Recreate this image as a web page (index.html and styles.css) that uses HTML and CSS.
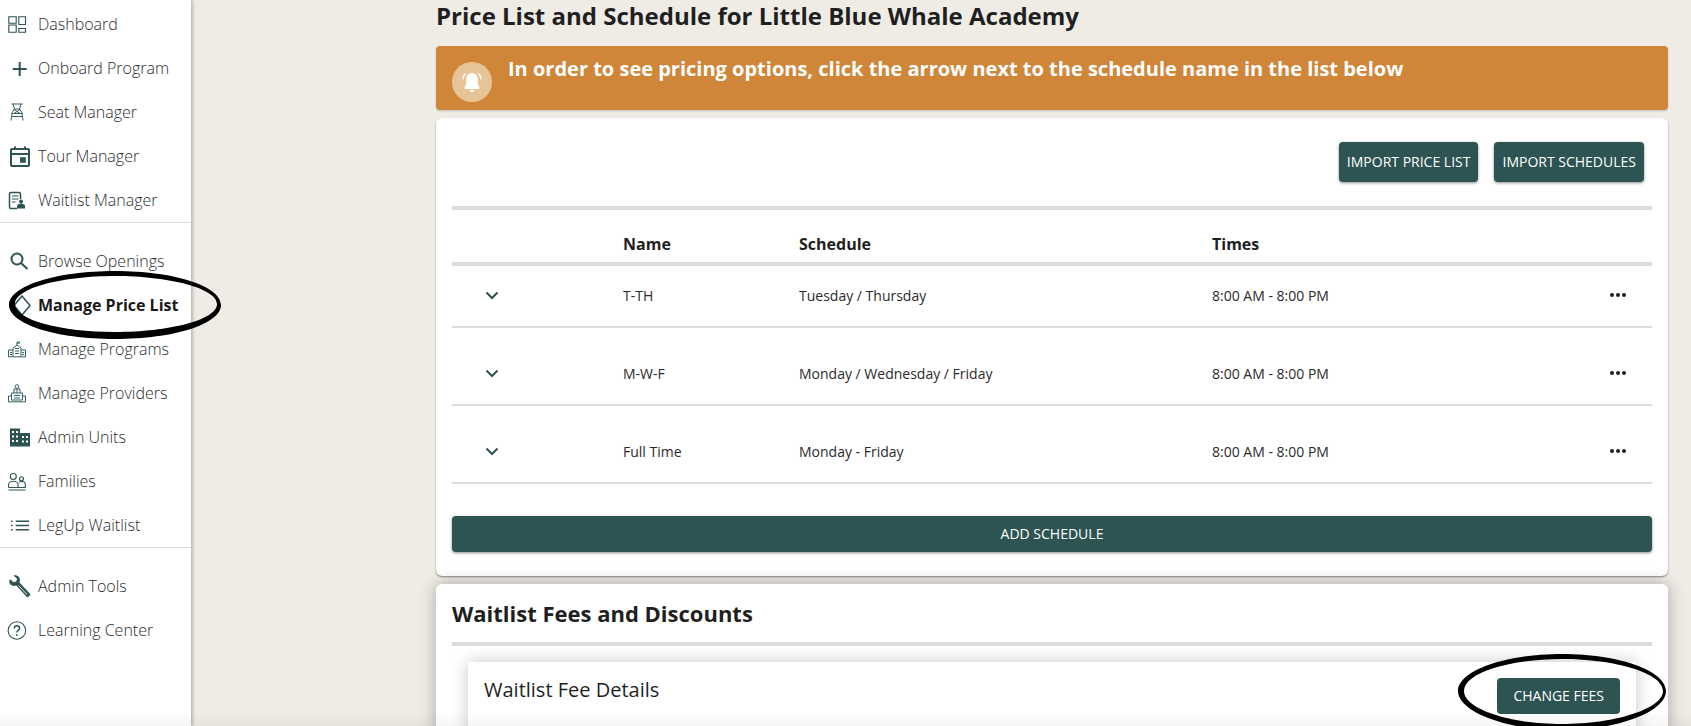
FILE: index.html
```html
<!DOCTYPE html>
<html lang="en">

<head>
  <meta charset="UTF-8">
  <title>Manage Price List</title>
  <link rel="stylesheet" href="styles.css">
</head>

<body>
  <nav class="sidebar">
    <ul class="nav-group">
      <li class="nav-item">
        <svg class="nav-icon" viewBox="0 0 25 25"><path d="M1.800 4.700h7.400v6.500h-7.400zM1.800 13h7.400v7.300h-7.400zM11.800 4.700h6.700v7.800h-6.700zM11.800 16.500h6.700v3.800h-6.700z"/></svg>
        Dashboard
      </li>
      <li class="nav-item">
        <svg class="nav-icon" viewBox="0 0 25 25"><path class="thick" d="M12.700 6v14M5.700 13h14"/></svg>
        Onboard Program
      </li>
      <li class="nav-item">
        <svg class="nav-icon pale" viewBox="0 0 25 25"><path d="M4.500 4h11M6 4l1.500 5h5L14 4M7.500 9l-3 4.500M12.500 9l3 4.500M7 9.500l6 4M13 9.500l-6 4M4.500 13.500h11M5 13.500l-1 7M15 13.500l1 7M5 16.500h10"/></svg>
        Seat Manager
      </li>
      <li class="nav-item">
        <svg class="nav-icon" viewBox="0 0 25 25"><path class="thick" d="M5 5h16a1 1 0 0 1 1 1v15a1 1 0 0 1-1 1H5a1 1 0 0 1-1-1V6a1 1 0 0 1 1-1zM4 10h18M8 2.500v3M18 2.500v3"/><rect class="solid" x="13" y="13.200" width="5.800" height="5.600"/></svg>
        Tour Manager
      </li>
      <li class="nav-item">
        <svg class="nav-icon" viewBox="0 0 25 25"><path class="mid" d="M10 20.500H4a1.500 1.500 0 0 1-1.500-1.500V6A1.500 1.500 0 0 1 4 4.500h8A1.500 1.500 0 0 1 13.500 6v5"/><path d="M5 8h6.500M5 11h6.500M5 14h3.500"/><circle class="solid" cx="14" cy="13.500" r="2"/><path class="solid" d="M10 20.500V18c0-1.500 2-2.500 4-2.500s4 1 4 2.500v2.500z"/></svg>
        Waitlist Manager
      </li>
    </ul>
    <ul class="nav-group">
      <li class="nav-item">
        <svg class="nav-icon" viewBox="0 0 25 25"><circle class="thick" cx="10" cy="10" r="5.500"/><path class="thick" d="M14 14l6.500 6"/></svg>
        Browse Openings
      </li>
      <li class="nav-item active">
        <svg class="nav-icon" viewBox="0 0 25 25"><path class="mid" d="M15 3l8 9.500-8 9.500-8-9.500z"/></svg>
        Manage Price List
      </li>
      <li class="nav-item">
        <svg class="nav-icon pale" viewBox="0 0 25 25"><path d="M6 11l4-3 4 3M10 8V5h2.500V6.200H10M6 11v8.500M14 11v8.500M1.500 13H6M14 13h4.500M1.500 13v6.500M18.500 13v6.500M1 19.800h18M8 11.500h4M8 14h4M8 16.500h4M3 15.500h2M3 17.500h2M15 15.500h2M15 17.500h2"/></svg>
        Manage Programs
      </li>
      <li class="nav-item">
        <svg class="nav-icon pale" viewBox="0 0 25 25"><circle cx="10" cy="5.500" r="1.800"/><path d="M7 12V8h6v4M4.500 12h11v7h-11zM1.500 15h3M15.500 15h3M1.500 15v5.500M18.500 15v5.500M1 20.800h18M7 14.500h6M7 17h6M10 8v4"/></svg>
        Manage Providers
      </li>
      <li class="nav-item">
        <svg class="nav-icon" viewBox="0 0 25 25"><path class="solid" fill-rule="evenodd" d="M3 3.500h10v4.500h10v13.500H3zM5 6v2h2V6zM9 6v2h2V6zM5 10.500v2h2v-2zM9 10.500v2h2v-2zM5 15v2h2v-2zM9 15v2h2v-2zM15 11v2h2v-2zM19 11v2h2v-2zM15 15.500v2h2v-2zM19 15.500v2h2v-2z"/></svg>
        Admin Units
      </li>
      <li class="nav-item">
        <svg class="nav-icon" viewBox="0 0 25 25"><circle cx="6.300" cy="7.500" r="3"/><circle cx="14.500" cy="9.800" r="2"/><path d="M1.500 18.500v-3c0-2 2.500-3.200 4.800-3.200s4.800 1.200 4.800 3.200v3M12 13.200c.8-.5 1.700-.7 2.500-.7 2 0 3.800 1 3.800 2.800v3.200H11.100M1.500 18.500h9.600M1.500 21h17"/></svg>
        Families
      </li>
      <li class="nav-item">
        <svg class="nav-icon" viewBox="0 0 25 25"><path class="mid" d="M8.700 8.200H22M8.700 12.500H22M8.700 16.800H22M4 8.200h1.600M4 12.500h1.600M4 16.800h1.600"/></svg>
        LegUp Waitlist
      </li>
    </ul>
    <ul class="nav-group last">
      <li class="nav-item">
        <svg class="nav-icon" viewBox="0 0 25 25"><path class="solid" d="M3 5l3.500 3.200 2.800-.7.800-2.800L6.500 1.500c3-.8 6.300 1 6.500 4.500 0 1-.2 1.800-.6 2.500l10.400 11c.6.700.6 1.300 0 1.900l-1.300 1.300c-.6.600-1.300.6-1.900 0L9.300 11.500c-.9.400-1.800.5-2.800.4C3 11.500 1.300 8.300 3 5z"/><path class="cut" d="M11.500 11.500l8.500 9"/></svg>
        Admin Tools
      </li>
      <li class="nav-item">
        <svg class="nav-icon" viewBox="0 0 25 25"><circle cx="9.900" cy="12.500" r="8.800"/><path class="mid" d="M7.300 10.500c0-1.700 1.200-2.700 2.600-2.700s2.600 1 2.600 2.500c0 2.200-2.600 2-2.600 4.300"/><circle class="solid" cx="9.900" cy="17" r=".9"/></svg>
        Learning Center
      </li>
    </ul>
  </nav>

  <main class="content">
    <h1 class="page-title">Price List and Schedule for Little Blue Whale Academy</h1>

    <div class="banner">
      <span class="banner-icon">
        <svg viewBox="0 0 24 24" width="24" height="24"><path class="bell" d="M12 3c-3.800 0-5.800 3-5.800 6.500v4.500L4.500 17.500V19h15v-1.500L17.800 14V9.500C17.800 6 15.800 3 12 3zM9.800 20h4.400a2.200 2 0 0 1-4.400 0z"/><path class="bell-line" d="M2.800 9c.3-2.200 1.300-4 2.800-5.500M21.200 9c-.3-2.200-1.300-4-2.800-5.500"/></svg>
      </span>
      <p class="banner-text">In order to see pricing options, click the arrow next to the schedule name in the list below</p>
    </div>

    <section class="card">
      <div class="card-actions">
        <button class="btn">IMPORT PRICE LIST</button>
        <button class="btn">IMPORT SCHEDULES</button>
      </div>
      <div class="table-row table-head">
        <span></span>
        <span>Name</span>
        <span>Schedule</span>
        <span>Times</span>
        <span></span>
      </div>
      <div class="table-row first">
        <svg class="chevron" viewBox="0 0 14 9"><path d="M1.500 1.500l5.500 5.500 5.500-5.500"/></svg>
        <span>T-TH</span>
        <span>Tuesday / Thursday</span>
        <span>8:00 AM - 8:00 PM</span>
        <span class="dots"><i></i><i></i><i></i></span>
      </div>
      <div class="table-row">
        <svg class="chevron" viewBox="0 0 14 9"><path d="M1.500 1.500l5.500 5.500 5.500-5.500"/></svg>
        <span>M-W-F</span>
        <span>Monday / Wednesday / Friday</span>
        <span>8:00 AM - 8:00 PM</span>
        <span class="dots"><i></i><i></i><i></i></span>
      </div>
      <div class="table-row">
        <svg class="chevron" viewBox="0 0 14 9"><path d="M1.500 1.500l5.500 5.500 5.500-5.500"/></svg>
        <span>Full Time</span>
        <span>Monday - Friday</span>
        <span>8:00 AM - 8:00 PM</span>
        <span class="dots"><i></i><i></i><i></i></span>
      </div>
      <button class="btn btn-wide">ADD SCHEDULE</button>
    </section>

    <section class="card card-raised">
      <h2 class="card-title">Waitlist Fees and Discounts</h2>
      <div class="inner-card">
        <h3 class="inner-title">Waitlist Fee Details</h3>
        <button class="btn btn-small">CHANGE FEES</button>
      </div>
    </section>
  </main>

  <div class="bottom-fade"></div>

  <svg class="mark mark-nav" viewBox="0 0 214 70"><path fill-rule="evenodd" d="M107 1C166 1 213 16 213 35S166 69 107 69 1 54 1 35 48 1 107 1zM107 6C54 6 7 18 7 34s46 28 100 28 102-12 102-28S160 6 107 6z"/></svg>
  <svg class="mark mark-fees" viewBox="0 0 210 78"><path fill-rule="evenodd" d="M105 1c58 0 104 17 104 37s-46 39-104 39S1 58 1 38 47 1 105 1zM105 6C52 6 7 20 7 38s46 33 98 33 101-15 101-33S158 6 105 6z"/></svg>
</body>

</html>
```

FILE: styles.css
```css
* {
  box-sizing: border-box;
}

html,
body {
  height: 100%;
}

body {
  margin: 0;
  display: flex;
  overflow: hidden;
  font-family: "Open Sans", sans-serif;
  background: #efece6;
  color: #1f1f1f;
}

.sidebar {
  flex: 0 0 191px;
  height: 726px;
  padding-top: 2px;
  background: #fff;
  box-shadow: 2px 0 3px rgba(0, 0, 0, 0.22);
}

.nav-group {
  list-style: none;
  margin: 0;
  padding: 0;
  border-bottom: 1px solid #dcdcdc;
}

.nav-group + .nav-group {
  padding-top: 16px;
}

.nav-group.last {
  border-bottom: none;
}

.nav-item {
  display: flex;
  align-items: center;
  gap: 6px;
  height: 44px;
  padding-left: 7px;
  font-size: 16px;
  font-weight: 300;
  color: #2c2c2c;
  white-space: nowrap;
}

.nav-item.active {
  font-weight: 700;
  color: #1a1a1a;
}

.nav-icon {
  flex: 0 0 25px;
  width: 25px;
  height: 25px;
  fill: none;
  stroke: #2d5353;
  stroke-width: 1.1;
}

.nav-icon.pale {
  stroke: #356060;
  stroke-width: 1;
}

.nav-icon .mid {
  stroke-width: 1.5;
}

.nav-icon .thick {
  stroke-width: 2;
}

.nav-icon .solid {
  fill: #2d5353;
  stroke: none;
}

.nav-icon .cut {
  stroke: #fff;
  stroke-width: 0.9;
}

.content {
  flex: 1;
  height: 726px;
  padding: 0 23px 0 245px;
  overflow: hidden;
}

.page-title {
  margin: 0 0 12px;
  height: 34px;
  font-size: 24px;
  line-height: 32px;
  font-weight: 700;
}

.banner {
  display: flex;
  gap: 16px;
  height: 64px;
  margin-bottom: 8px;
  padding: 16px;
  background: #d08639;
  border-radius: 4px;
  box-shadow: 0 1px 2px rgba(0, 0, 0, 0.2);
}

.banner-icon {
  display: flex;
  align-items: center;
  justify-content: center;
  flex: 0 0 40px;
  width: 40px;
  height: 40px;
  border-radius: 50%;
  background: #e7c497;
}

.bell {
  fill: #fff;
}

.bell-line {
  fill: none;
  stroke: #fff;
  stroke-width: 1.4;
}

.banner-text {
  margin: -5px 0 0;
  font-size: 20px;
  line-height: 20px;
  padding-top: 2px;
  font-weight: 700;
  color: #fff;
  white-space: nowrap;
}

.card {
  margin-bottom: 8px;
  padding: 24px 16px;
  background: #fff;
  border-radius: 6px;
  box-shadow: 0 1px 2px rgba(0, 0, 0, 0.45);
}

.card-raised {
  padding: 0 16px;
  height: 200px;
  box-shadow: 0 0 16px rgba(0, 0, 0, 0.3);
}

.card-actions {
  display: flex;
  justify-content: flex-end;
  gap: 16px;
  height: 64px;
  padding-right: 8px;
}

.btn {
  height: 40px;
  padding: 0 8px 2px;
  font-family: inherit;
  font-size: 14px;
  color: #fff;
  background: #2d5353;
  border: none;
  border-radius: 4px;
  box-shadow: 0 1px 3px rgba(0, 0, 0, 0.45);
}

.btn-wide {
  display: block;
  width: 100%;
  height: 36px;
  margin-top: 32px;
}

.btn-small {
  height: 36px;
  padding: 0 16px 2px;
  box-shadow: none;
}

.table-row {
  display: grid;
  grid-template-columns: 171px 176px 413px 1fr 42px;
  align-items: center;
  height: 78px;
  padding: 16px 0 2px;
  font-size: 14px;
  color: #2b2b2b;
  border-bottom: 2px solid #dcdcdc;
}

.table-row.first {
  height: 62px;
  padding-top: 0;
}

.table-head {
  height: 60px;
  padding: 16px 0 0;
  font-size: 16px;
  font-weight: 700;
  color: #1f1f1f;
  border-top: 4px solid #dcdcdc;
  border-bottom: 4px solid #dcdcdc;
}

.chevron {
  justify-self: start;
  width: 14px;
  height: 9px;
  margin-left: 33px;
  fill: none;
  stroke: #2d5353;
  stroke-width: 2;
}

.dots {
  display: flex;
  gap: 2px;
}

.dots i {
  width: 4px;
  height: 4px;
  border-radius: 50%;
  background: #1f1f1f;
}

.card-title {
  margin: 0;
  height: 62px;
  font-size: 22px;
  line-height: 58px;
  font-weight: 700;
  border-bottom: 4px solid #dcdcdc;
}

.inner-card {
  display: flex;
  justify-content: space-between;
  align-items: flex-start;
  margin: 16px 16px 0;
  height: 120px;
  padding: 16px;
  background: #fff;
  box-shadow: 0 0 16px rgba(0, 0, 0, 0.22);
}

.inner-title {
  margin: -2px 0 0;
  font-size: 20px;
  line-height: 28px;
  font-weight: 400;
}

.bottom-fade {
  position: fixed;
  left: 0;
  right: 0;
  bottom: 0;
  height: 14px;
  background: linear-gradient(rgba(0, 0, 0, 0), rgba(0, 0, 0, 0.04));
  pointer-events: none;
}

.mark {
  position: fixed;
  fill: #000;
  pointer-events: none;
}

.mark-nav {
  left: 8px;
  top: 270px;
  width: 214px;
  height: 70px;
}

.mark-fees {
  left: 1457px;
  top: 653px;
  width: 210px;
  height: 78px;
}
```
